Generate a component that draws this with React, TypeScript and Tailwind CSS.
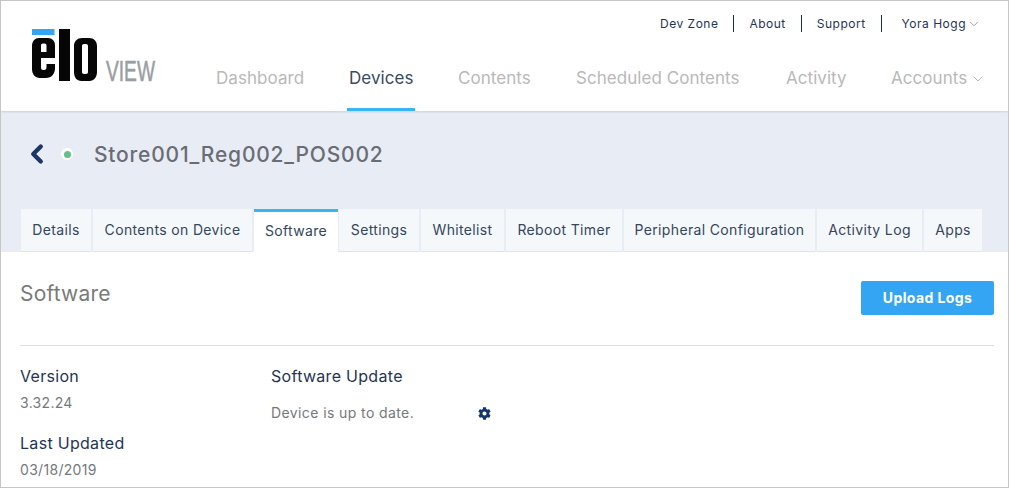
import { ChevronDown, ChevronLeft } from "lucide-react"
import { FaCog } from "react-icons/fa"

const topLinks = ["Dev Zone", "About", "Support"]
const navItems = [
  { label: "Dashboard", width: "w-[133px]" },
  { label: "Devices", width: "w-[109px]", active: true },
  { label: "Contents", width: "w-[118px]" },
  { label: "Scheduled Contents", width: "w-[210px]" },
  { label: "Activity", width: "w-[105px]" },
]
const tabs = [
  { label: "Details", width: "w-[70px]" },
  { label: "Contents on Device", width: "w-[159px]" },
  { label: "Software", width: "w-[84px]", active: true },
  { label: "Settings", width: "w-[80px]" },
  { label: "Whitelist", width: "w-[83px]" },
  { label: "Reboot Timer", width: "w-[116px]" },
  { label: "Peripheral Configuration", width: "w-[191px]" },
  { label: "Activity Log", width: "w-[105px]" },
  { label: "Apps", width: "w-[58px]" },
]

function Logo() {
  return (
    <svg width="156" height="56" viewBox="0 0 156 56" className="block overflow-visible">
      <rect x="0" y="0" width="22.5" height="6" fill="#33a5f2" />
      <path
        fillRule="evenodd"
        d="M7 9h9c4 0 7 3 7 7v13H9v9c0 2 .6 3 2.200 3h.8c1.800 0 2.500-1 2.500-3v-3h8.500v4c0 6-3.500 10-9 10H8c-5 0-8-4-8-9V17c0-5 3-8 7-8zM9 16.500V23h5.500v-6.500c0-1.200-.7-2-2-2h-1.500C9.700 14.500 9 15.300 9 16.500z"
        fill="#060606"
      />
      <rect x="27" y="0" width="11" height="52" fill="#060606" />
      <path
        fillRule="evenodd"
        d="M50 9h7c5 0 8 3.500 8 8v26c0 5-3 9-7.500 9h-8c-5 0-7.500-4-7.500-9V17c0-5 3.500-8 8-8zM52 15c-1.300 0-2 .8-2 2v26c0 1.200.7 2 2 2h2c1.300 0 2-.8 2-2V17c0-1.200-.7-2-2-2z"
        fill="#060606"
      />
      <text
        x="74"
        y="52"
        textLength="49"
        lengthAdjust="spacingAndGlyphs"
        fontFamily="'Liberation Sans', sans-serif"
        fontSize="29"
        stroke="#9a9ea4"
        strokeWidth="0.6"
        fill="#9a9ea4"
      >
        VIEW
      </text>
    </svg>
  )
}

export default function App() {
  return (
    <div className="w-[1009px] h-[488px] overflow-hidden border border-[#c6c6c6] bg-white font-['Inter',sans-serif] flex flex-col">
      <header className="h-[110px] shrink-0 flex bg-white shadow-[0_1px_2px_rgba(0,0,0,0.12)] relative z-10">
        <div className="w-[215px] pl-[31px] pt-[28px]">
          <Logo />
        </div>
        <div className="flex-1 flex flex-col">
          <div className="h-[46px] flex items-start justify-end pt-[14px] pr-[27px] text-xs tracking-[0.5px] text-[#1d3557]">
            {topLinks.map((link) => (
              <span key={link} className="h-[17px] flex items-center pr-[15px] mr-[15px] border-r border-[#12305c]">
                {link}
              </span>
            ))}
            <span className="h-[17px] flex items-center ml-[5px] gap-[1px]">
              Yora Hogg
              <ChevronDown className="w-[14px] h-[14px] text-[#8a94a0] stroke-[1.500]" />
            </span>
          </div>
          <nav className="flex-1 flex text-[17px] tracking-[0.05px] text-[#b9b9b9]">
            {navItems.map((item) => (
              <div key={item.label} className={`${item.width} h-full`}>
                <span
                  className={`inline-block h-[64px] pt-[19px] leading-[24px] ${
                    item.active ? "-ml-[2px] px-[2px] text-[#3b4a5e] border-b-[3px] border-[#38b6f1]" : ""
                  }`}
                >
                  {item.label}
                </span>
              </div>
            ))}
            <span className="pt-[19px] leading-[24px] flex items-start gap-[3px]">
              Accounts
              <ChevronDown className="w-[16px] h-[16px] mt-[5px] stroke-[1.500]" />
            </span>
          </nav>
        </div>
      </header>

      <section className="h-[141px] shrink-0 bg-[#e8ecf4] flex flex-col">
        <div className="h-[98px] pl-[21px] flex items-center pb-[12px]">
          <ChevronLeft className="w-[30px] h-[30px] text-[#1c3767] stroke-[3.500]" />
          <span className="ml-[9px] w-[12px] h-[12px] rounded-full bg-white flex items-center justify-center">
            <span className="w-[7px] h-[7px] rounded-full bg-[#62c08a]" />
          </span>
          <h1 className="ml-[21px] mt-[2px] text-[21px] font-medium tracking-[0.8px] text-[#6a6d74]">Store001_Reg002_POS002</h1>
        </div>
        <div className="flex-1 flex items-end pl-[20px] gap-[2px]">
          {tabs.map((tab) => (
            <div
              key={tab.label}
              className={`${tab.width} h-[43px] shrink-0 flex items-center justify-center text-sm tracking-[0.35px] text-[#34465c] ${
                tab.active
                  ? "bg-white border-t-[3px] border-[#38b6f1] pb-[2px] -mr-px"
                  : "bg-[#f5f8fa] border-b border-[#dfe3e8]"
              }`}
            >
              {tab.label}
            </div>
          ))}
        </div>
      </section>

      <main className="flex-1 pl-[19px] pr-[14px] bg-white">
        <div className="h-[94px] flex items-start justify-between border-b border-[#dedede]">
          <h2 className="mt-[29px] text-[21px] leading-[26px] tracking-[0.2px] text-[#7a7a7a]">Software</h2>
          <button className="mt-[29px] w-[133px] h-[34px] rounded-[2px] bg-[#33a5f2] text-white text-sm font-bold tracking-[0.4px]">
            Upload Logs
          </button>
        </div>
        <div className="flex pt-[20px]">
          <div className="w-[251px]">
            <div className="text-base leading-[20px] tracking-[0.3px] text-[#1f3555]">Version</div>
            <div className="mt-[8px] text-sm leading-[18px] tracking-[0.3px] text-[#76787c]">3.32.24</div>
            <div className="mt-[21px] text-base leading-[20px] tracking-[0.3px] text-[#1f3555]">Last Updated</div>
            <div className="mt-[8px] text-sm leading-[18px] tracking-[0.3px] text-[#76787c]">03/18/2019</div>
          </div>
          <div>
            <div className="text-base leading-[20px] tracking-[0.3px] text-[#1f3555]">Software Update</div>
            <div className="mt-[18px] flex items-center text-sm leading-[18px] tracking-[0.4px] text-[#76787c]">
              <span className="w-[207px]">Device is up to date.</span>
              <FaCog className="w-[13px] h-[13px] text-[#12376e]" />
            </div>
          </div>
        </div>
      </main>
    </div>
  )
}
